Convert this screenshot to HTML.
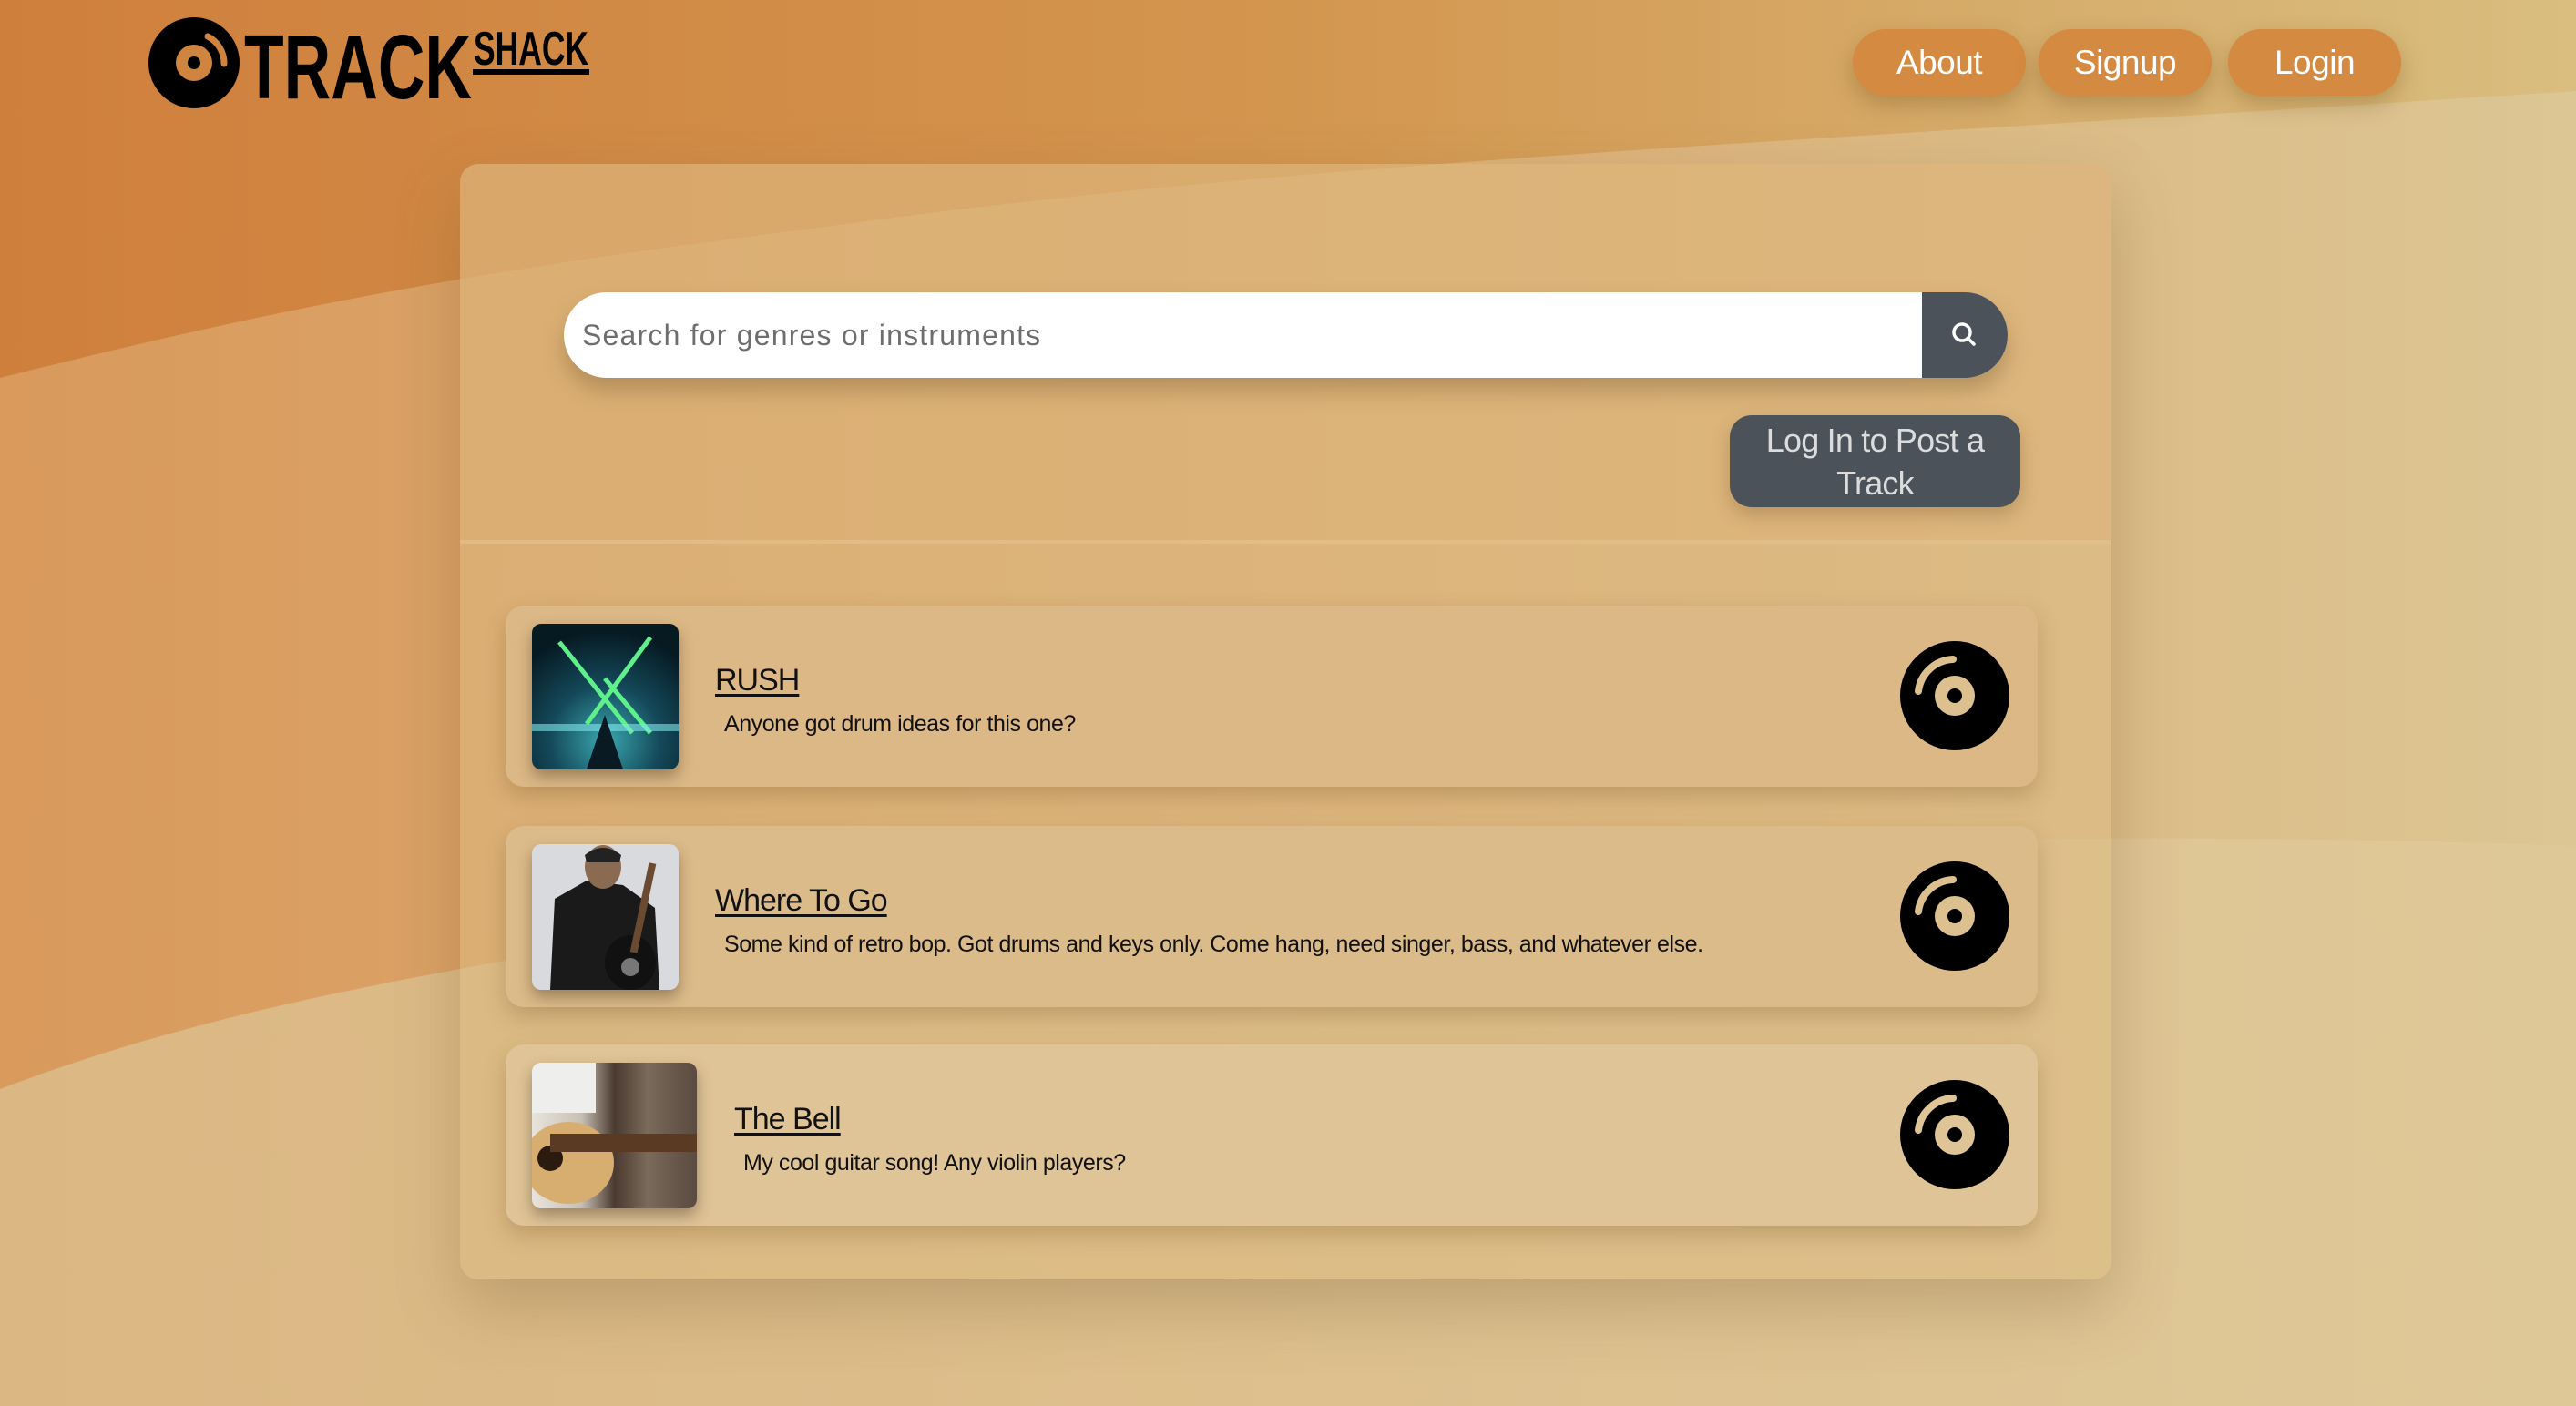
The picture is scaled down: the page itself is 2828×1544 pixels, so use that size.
<!DOCTYPE html>
<html><head><meta charset="utf-8"><style>
*{box-sizing:border-box;margin:0;padding:0}
body{width:2828px;height:1544px;overflow:hidden;position:relative;font-family:"Liberation Sans",sans-serif;background:#d9b987}
.bg{position:absolute;left:0;top:0}
.logo{position:absolute;left:162px;top:18px;width:500px;height:104px}
.nav{position:absolute;top:32px;height:73px;width:190px;border-radius:36px;background:#d48a40;color:#fff;font-size:37px;letter-spacing:-0.5px;text-align:center;line-height:73px;box-shadow:0 10px 24px rgba(120,80,30,.35)}
.panel{position:absolute;left:505px;top:180px;width:1813px;height:1225px;border-radius:20px;background:rgba(221,185,130,.55);box-shadow:0 30px 70px rgba(120,90,50,.3);overflow:hidden}
.ptop{position:absolute;left:0;top:0;width:100%;height:417px;background:rgba(220,175,115,.35);border-bottom:4px solid rgba(230,200,150,.5)}
.search{position:absolute;left:619px;top:321px;width:1585px;height:94px;border-radius:47px;background:#fff;overflow:hidden;box-shadow:0 14px 24px rgba(110,80,40,.35)}
.search span{position:absolute;left:20px;top:0;line-height:94px;font-size:32px;color:#6e6e6e;letter-spacing:1.2px}
.sbtn{position:absolute;right:0;top:0;width:94px;height:94px;background:#4b525a}
.post{position:absolute;left:1899px;top:456px;width:319px;height:101px;border-radius:24px;background:#4b525a;color:#dcdcdc;font-size:36px;letter-spacing:-0.8px;text-align:center;line-height:47px;padding-top:4px;box-shadow:0 8px 20px rgba(100,70,30,.3)}
.card{position:absolute;left:555px;width:1682px;height:199px;border-radius:20px;background:#dcb886;box-shadow:0 10px 24px rgba(120,85,40,.3)}
.img{position:absolute;left:29px;top:20px;width:161px;height:160px;border-radius:10px;overflow:hidden;box-shadow:0 8px 16px rgba(60,40,20,.4)}
.t{position:absolute;font-size:34px;letter-spacing:-1px;color:#111;text-decoration:underline;text-underline-offset:4px}
.d{position:absolute;font-size:25px;letter-spacing:-0.45px;color:#111}
.disc{position:absolute;left:1531px;top:39px;width:120px;height:120px}
</style></head><body>
<svg class="bg" width="2828" height="1544">
<defs>
<linearGradient id="g1" x1="0" y1="0" x2="1" y2="0"><stop offset="0" stop-color="#cf7f3c"/><stop offset=".5" stop-color="#d3964f"/><stop offset="1" stop-color="#d9be80"/></linearGradient>
<linearGradient id="g2" x1="0" y1="0" x2="1" y2="0"><stop offset="0" stop-color="#d99a5c"/><stop offset=".6" stop-color="#dcb27a"/><stop offset="1" stop-color="#dcc694"/></linearGradient>
<linearGradient id="g3" x1="0" y1="0" x2="1" y2="0"><stop offset="0" stop-color="#dbb783"/><stop offset="1" stop-color="#dfc898"/></linearGradient>
</defs>
<rect width="2828" height="1544" fill="url(#g1)"/>
<path d="M0 415 C300 340 500 300 900 250 C1400 180 1900 160 2828 100 L2828 1544 L0 1544Z" fill="url(#g2)"/>
<path d="M0 1196 C200 1120 400 1080 700 1030 C1300 950 2000 900 2828 929 L2828 1544 L0 1544Z" fill="url(#g3)"/>
</svg>
<svg class="logo" viewBox="0 0 500 104">
<circle cx="51" cy="51" r="50" fill="#000"/>
<circle cx="51" cy="51" r="20" fill="#cf8540"/>
<circle cx="51" cy="51" r="7" fill="#000"/>
<path d="M66 22 A33 33 0 0 1 84 52" stroke="#cf8540" stroke-width="7" fill="none" stroke-linecap="round"/>
<text x="106" y="90" font-family="Liberation Sans Narrow, Liberation Sans, sans-serif" font-weight="bold" font-size="100" textLength="250" lengthAdjust="spacingAndGlyphs">TRACK</text>
<text x="358" y="53" font-family="Liberation Sans Narrow, Liberation Sans, sans-serif" font-weight="bold" font-size="52" textLength="126" lengthAdjust="spacingAndGlyphs">SHACK</text>
<rect x="357" y="58" width="128" height="6" fill="#000"/>
</svg>
<div class="nav" style="left:2034px">About</div>
<div class="nav" style="left:2238px">Signup</div>
<div class="nav" style="left:2446px">Login</div>
<div class="panel"><div class="ptop"></div></div>
<div class="search"><span>Search for genres or instruments</span><div class="sbtn"><svg width="94" height="94"><circle cx="44" cy="44" r="9" stroke="#fff" stroke-width="3.5" fill="none"/><line x1="51" y1="51" x2="57" y2="57" stroke="#fff" stroke-width="3.5" stroke-linecap="round"/></svg></div></div>
<div class="post">Log In to Post a<br>Track</div>

<div class="card" style="top:665px">
<div class="img" style="background:radial-gradient(circle at 50% 80%,#3aa8b0 0,#14495a 40%,#061a22 80%)"><svg width="161" height="160"><path d="M30 20 L110 120 M130 15 L60 110 M80 60 L130 120" stroke="#5ef08a" stroke-width="5"/><rect x="0" y="110" width="161" height="8" fill="#7fe6ea" opacity=".6"/><path d="M60 160 L80 100 L100 160Z" fill="#0a1a22"/></svg></div>
<div class="t" style="left:230px;top:63px">RUSH</div>
<div class="d" style="left:240px;top:116px">Anyone got drum ideas for this one?</div>
<svg class="disc" viewBox="0 0 120 120"><circle cx="60" cy="60" r="60" fill="#000"/><circle cx="60" cy="60" r="22" fill="#dcc08f"/><circle cx="60" cy="60" r="8" fill="#000"/><path d="M20 55 A40 40 0 0 1 58 20" stroke="#dcc08f" stroke-width="8" fill="none" stroke-linecap="round"/></svg>
</div>

<div class="card" style="top:907px;background:#dcbb8a">
<div class="img" style="background:#d8dade"><svg width="161" height="160"><path d="M20 160 L25 60 L60 40 L100 45 L135 70 L140 160Z" fill="#1a1a1a"/><ellipse cx="78" cy="25" rx="20" ry="24" fill="#8a6a50"/><path d="M58 12 Q78 -4 98 12 L96 20 L60 20Z" fill="#222"/><ellipse cx="108" cy="130" rx="28" ry="30" fill="#111"/><circle cx="108" cy="135" r="10" fill="#777"/><rect x="118" y="20" width="8" height="100" fill="#6a4a30" transform="rotate(12 122 70)"/></svg></div>
<div class="t" style="left:230px;top:63px">Where To Go</div>
<div class="d" style="left:240px;top:116px">Some kind of retro bop. Got drums and keys only. Come hang, need singer, bass, and whatever else.</div>
<svg class="disc" viewBox="0 0 120 120"><circle cx="60" cy="60" r="60" fill="#000"/><circle cx="60" cy="60" r="22" fill="#dcc08f"/><circle cx="60" cy="60" r="8" fill="#000"/><path d="M20 55 A40 40 0 0 1 58 20" stroke="#dcc08f" stroke-width="8" fill="none" stroke-linecap="round"/></svg>
</div>

<div class="card" style="top:1147px;background:#dfc497">
<div class="img" style="width:181px;background:linear-gradient(90deg,#e8e4dc 0,#c8c0b4 30%,#4a3a30 50%,#7a6a5a 70%,#5a4a40 100%)"><svg width="181" height="160"><ellipse cx="40" cy="110" rx="50" ry="45" fill="#d8ad70"/><circle cx="20" cy="105" r="14" fill="#2a1a10"/><rect x="20" y="78" width="161" height="20" fill="#5a3a22"/><rect x="0" y="0" width="70" height="55" fill="#eeeeec"/></svg></div>
<div class="t" style="left:251px;top:63px">The Bell</div>
<div class="d" style="left:261px;top:116px">My cool guitar song! Any violin players?</div>
<svg class="disc" viewBox="0 0 120 120"><circle cx="60" cy="60" r="60" fill="#000"/><circle cx="60" cy="60" r="22" fill="#dfc497"/><circle cx="60" cy="60" r="8" fill="#000"/><path d="M20 55 A40 40 0 0 1 58 20" stroke="#dfc497" stroke-width="8" fill="none" stroke-linecap="round"/></svg>
</div>
</body></html>
